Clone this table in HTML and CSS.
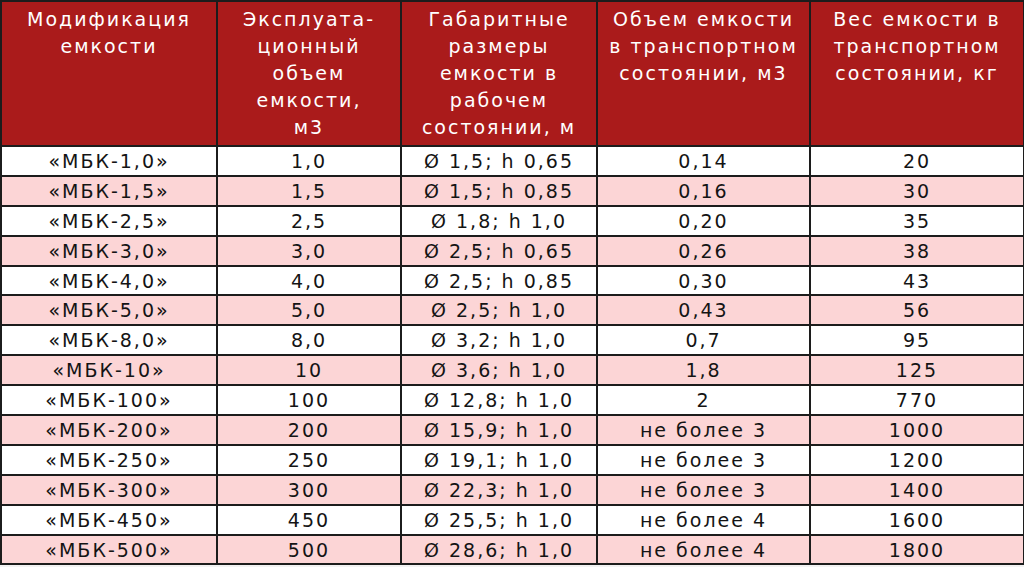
FILE: index.html
```html
<!DOCTYPE html>
<html lang="ru">
<head>
<meta charset="utf-8">
<link rel="stylesheet" href="styles.css">
</head>
<body>
<table class="spec">
  <colgroup>
    <col class="c1"><col class="c2"><col class="c3"><col class="c4"><col class="c5">
  </colgroup>
  <thead>
    <tr>
      <th>Модификация емкости</th>
      <th>Эксплуата-<br>ционный<br>объем<br>емкости,<br>м3</th>
      <th>Габаритные<br>размеры<br>емкости в<br>рабочем<br>состоянии, м</th>
      <th>Объем емкости<br>в транспортном<br>состоянии, м3</th>
      <th>Вес емкости в<br>транспортном<br>состоянии, кг</th>
    </tr>
  </thead>
  <tbody>
    <tr><td>«МБК-1,0»</td><td>1,0</td><td>Ø 1,5; h 0,65</td><td>0,14</td><td>20</td></tr>
    <tr><td>«МБК-1,5»</td><td>1,5</td><td>Ø 1,5; h 0,85</td><td>0,16</td><td>30</td></tr>
    <tr><td>«МБК-2,5»</td><td>2,5</td><td>Ø 1,8; h 1,0</td><td>0,20</td><td>35</td></tr>
    <tr><td>«МБК-3,0»</td><td>3,0</td><td>Ø 2,5; h 0,65</td><td>0,26</td><td>38</td></tr>
    <tr><td>«МБК-4,0»</td><td>4,0</td><td>Ø 2,5; h 0,85</td><td>0,30</td><td>43</td></tr>
    <tr><td>«МБК-5,0»</td><td>5,0</td><td>Ø 2,5; h 1,0</td><td>0,43</td><td>56</td></tr>
    <tr><td>«МБК-8,0»</td><td>8,0</td><td>Ø 3,2; h 1,0</td><td>0,7</td><td>95</td></tr>
    <tr><td>«МБК-10»</td><td>10</td><td>Ø 3,6; h 1,0</td><td>1,8</td><td>125</td></tr>
    <tr><td>«МБК-100»</td><td>100</td><td>Ø 12,8; h 1,0</td><td>2</td><td>770</td></tr>
    <tr><td>«МБК-200»</td><td>200</td><td>Ø 15,9; h 1,0</td><td>не более 3</td><td>1000</td></tr>
    <tr><td>«МБК-250»</td><td>250</td><td>Ø 19,1; h 1,0</td><td>не более 3</td><td>1200</td></tr>
    <tr><td>«МБК-300»</td><td>300</td><td>Ø 22,3; h 1,0</td><td>не более 3</td><td>1400</td></tr>
    <tr><td>«МБК-450»</td><td>450</td><td>Ø 25,5; h 1,0</td><td>не более 4</td><td>1600</td></tr>
    <tr><td>«МБК-500»</td><td>500</td><td>Ø 28,6; h 1,0</td><td>не более 4</td><td>1800</td></tr>
  </tbody>
</table>
</body>
</html>
```
FILE: styles.css
```css
html, body {
  margin: 0;
  padding: 0;
  background: #f2f2f2;
}
.spec {
  border-collapse: collapse;
  table-layout: fixed;
  width: 1023px;
  font-family: "DejaVu Sans", sans-serif;
  font-size: 19px;
  letter-spacing: 2px;
  color: #141414;
  background: #ffffff;
}
.c1 { width: 216px; }
.c2 { width: 184px; }
.c3 { width: 196px; }
.c4 { width: 213px; }
.c5 { width: 214px; }
.spec th,
.spec td {
  border: 2px solid #1c1c1c;
  text-align: center;
  padding: 0;
}
.spec th {
  background: #aa1b1b;
  color: #ffffff;
  font-weight: normal;
  vertical-align: top;
  line-height: 27px;
  height: 145px;
  padding: 4px 0 0;
  box-sizing: border-box;
}
.spec td {
  height: 29.9px;
  line-height: 26px;
  box-sizing: border-box;
}
.spec tbody tr:nth-child(even) td {
  background: #fcd5d6;
}
```
